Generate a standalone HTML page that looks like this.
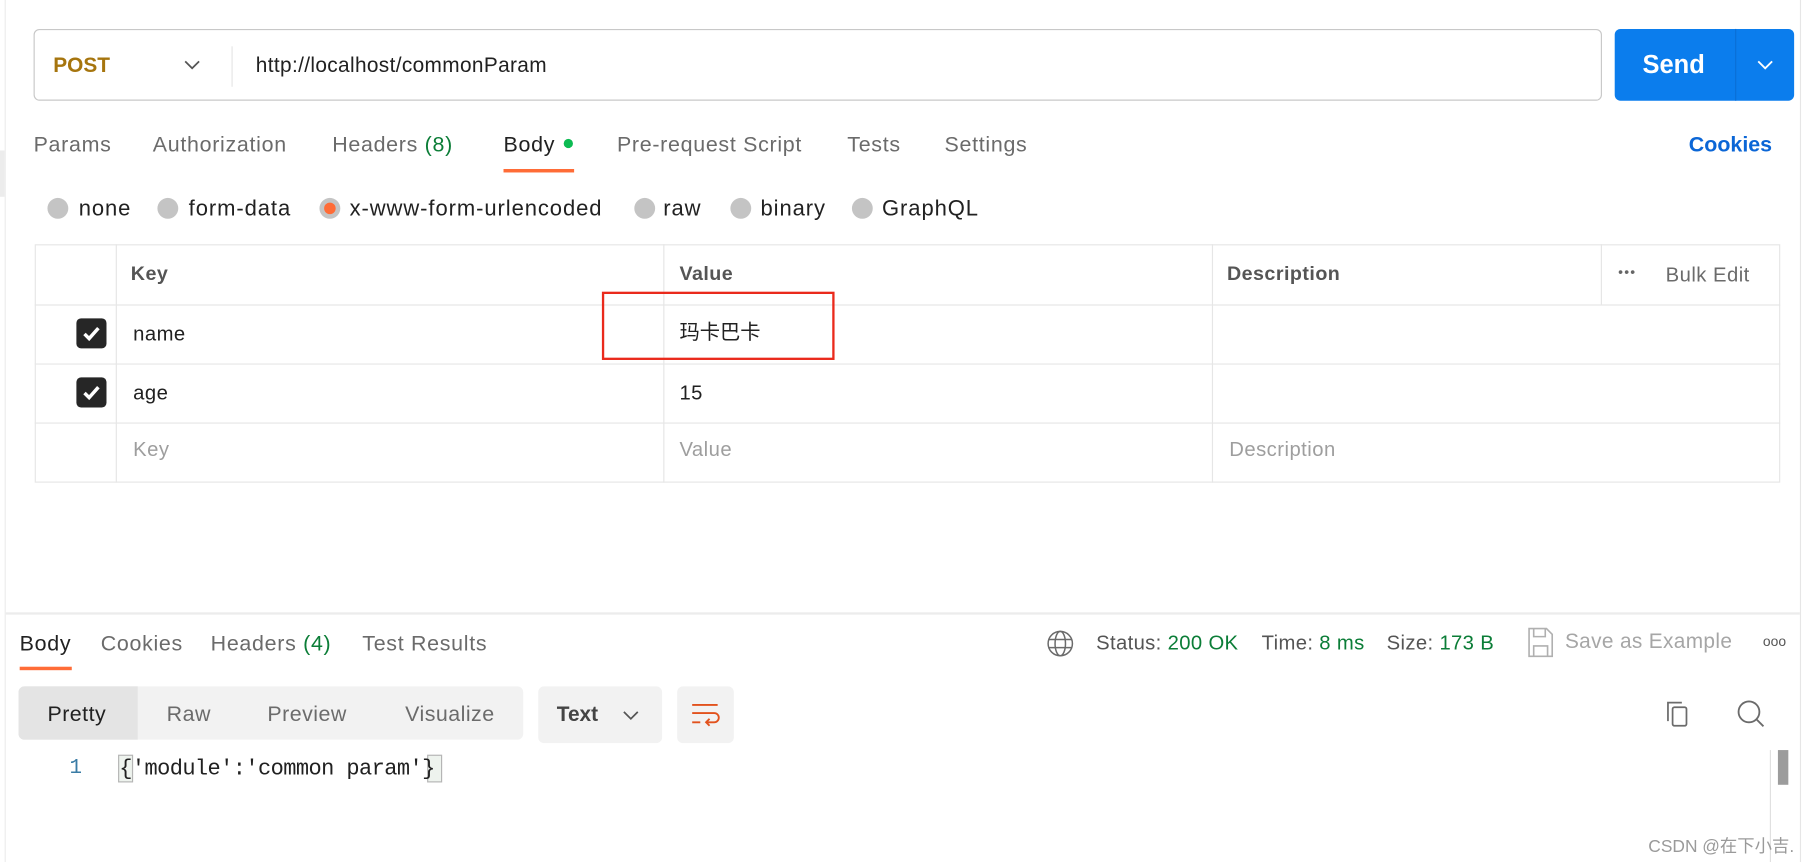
<!DOCTYPE html>
<html><head><meta charset="utf-8"><style>
*{margin:0;padding:0;box-sizing:border-box}
html,body{width:1808px;height:859px;overflow:hidden;background:#fff}
#s{position:absolute;left:0;top:0;width:1562px;height:745px;transform:scale(1.1575);transform-origin:0 0;font-family:"Liberation Sans","Noto Sans CJK SC",sans-serif;color:#212121}
.a{position:absolute;white-space:nowrap}
.t{font-size:18.5px;color:#6b6b6b;top:114px;letter-spacing:0.6px}
.r{top:170px;font-size:19px;color:#212121;letter-spacing:0.8px}
.c{position:absolute;width:18px;height:18px;border-radius:50%;background:#c4c4c4;top:171px}
.h{font-size:17px;font-weight:bold;color:#555;top:227px;letter-spacing:0.4px}
.cell{font-size:17.5px;color:#212121;letter-spacing:0.4px}
.ph{font-size:17.5px;color:#9e9e9e;top:378px;letter-spacing:0.4px}
.cb{position:absolute;left:66px;width:26px;height:26px;background:#262626;border-radius:4px}
.g{color:#0b7d37}
.seg{font-size:18.5px;color:#6b6b6b;top:606px;letter-spacing:0.4px}
</style></head><body><div id="s">
<div class="a" style="left:4px;top:0;width:1px;height:745px;background:#ececec"></div>
<div class="a" style="left:0;top:130px;width:4px;height:40px;background:#ececec"></div>
<div class="a" style="left:1555px;top:0;width:1px;height:745px;background:#e6e6e6"></div>
<div class="a" style="left:29px;top:25px;width:1355px;height:62px;border:1px solid #c8c8c8;border-radius:5px"></div>
<div class="a" style="left:46px;top:46px;font-size:18px;font-weight:bold;color:#a6750e">POST</div>
<svg class="a" style="left:158px;top:50px" width="16" height="12"><path d="M2 3l6 6 6-6" stroke="#555" stroke-width="1.5" fill="none"/></svg>
<div class="a" style="left:200px;top:40px;width:1px;height:35px;background:#e6e6e6"></div>
<div class="a" style="left:221px;top:46px;font-size:18px;color:#212121;letter-spacing:0.3px">http://localhost/commonParam</div>
<div class="a" style="left:1395px;top:25px;width:155px;height:62px;background:#0b7ded;border-radius:5px"></div>
<div class="a" style="left:1499px;top:25px;width:1px;height:62px;background:#0a6fd6"></div>
<div class="a" style="left:1419px;top:43px;font-size:22px;font-weight:bold;color:#fff">Send</div>
<svg class="a" style="left:1517px;top:50px" width="16" height="12"><path d="M2 3l6 6 6-6" stroke="#fff" stroke-width="1.6" fill="none"/></svg>
<div class="a t" style="left:29px">Params</div>
<div class="a t" style="left:132px">Authorization</div>
<div class="a t" style="left:287px">Headers <span class="g">(8)</span></div>
<div class="a t" style="left:435px;color:#212121">Body</div>
<div class="a" style="left:487px;top:120px;width:8px;height:8px;border-radius:50%;background:#0cbb52"></div>
<div class="a" style="left:435px;top:146px;width:61px;height:3px;background:#ff6c37"></div>
<div class="a t" style="left:533px">Pre-request Script</div>
<div class="a t" style="left:732px">Tests</div>
<div class="a t" style="left:816px">Settings</div>
<div class="a t" style="left:1459px;color:#0b66d6;font-weight:bold;letter-spacing:0">Cookies</div>
<div class="c" style="left:41px"></div><div class="a r" style="left:68px">none</div>
<div class="c" style="left:136px"></div><div class="a r" style="left:163px">form-data</div>
<div class="c" style="left:276px;background:#c4c4c4"><div style="margin:4px;width:10px;height:10px;border-radius:50%;background:#ff6c37"></div></div><div class="a r" style="left:302px">x-www-form-urlencoded</div>
<div class="c" style="left:548px"></div><div class="a r" style="left:573px">raw</div>
<div class="c" style="left:631px"></div><div class="a r" style="left:657px">binary</div>
<div class="c" style="left:736px"></div><div class="a r" style="left:762px">GraphQL</div>
<div class="a" style="left:30px;top:211px;width:1508px;height:206px;border:1px solid #e6e6e6"></div>
<div class="a" style="left:30px;top:263px;width:1508px;height:1px;background:#e6e6e6"></div>
<div class="a" style="left:30px;top:314px;width:1508px;height:1px;background:#e6e6e6"></div>
<div class="a" style="left:30px;top:365px;width:1508px;height:1px;background:#e6e6e6"></div>
<div class="a" style="left:100px;top:211px;width:1px;height:206px;background:#e6e6e6"></div>
<div class="a" style="left:573px;top:211px;width:1px;height:206px;background:#e6e6e6"></div>
<div class="a" style="left:1047px;top:211px;width:1px;height:206px;background:#e6e6e6"></div>
<div class="a" style="left:1383px;top:211px;width:1px;height:52px;background:#e6e6e6"></div>
<div class="a h" style="left:113px">Key</div>
<div class="a h" style="left:587px">Value</div>
<div class="a h" style="left:1060px">Description</div>
<div class="a" style="left:1398px;top:228px;font-size:12px;color:#666;letter-spacing:1px">•••</div>
<div class="a" style="left:1439px;top:227px;font-size:17.5px;color:#6b6b6b;letter-spacing:0.4px">Bulk Edit</div>
<div class="cb" style="top:275px"><svg width="26" height="26"><path d="M7 13.5l4 4 8-9" stroke="#fff" stroke-width="3" fill="none"/></svg></div>
<div class="cb" style="top:326px"><svg width="26" height="26"><path d="M7 13.5l4 4 8-9" stroke="#fff" stroke-width="3" fill="none"/></svg></div>
<div class="a cell" style="left:115px;top:278px">name</div>
<div class="a cell" style="left:587px;top:274px;letter-spacing:0">玛卡巴卡</div>
<div class="a cell" style="left:115px;top:329px">age</div>
<div class="a cell" style="left:587px;top:329px">15</div>
<div class="a ph" style="left:115px">Key</div>
<div class="a ph" style="left:587px">Value</div>
<div class="a ph" style="left:1062px">Description</div>
<div class="a" style="left:520px;top:252px;width:201px;height:59px;border:2px solid #ea2a1c"></div>
<div class="a" style="left:5px;top:529px;width:1550px;height:2px;background:#ececec"></div>
<div class="a t" style="left:17px;top:545px;color:#212121">Body</div>
<div class="a" style="left:17px;top:576px;width:45px;height:3px;background:#ff6c37"></div>
<div class="a t" style="left:87px;top:545px">Cookies</div>
<div class="a t" style="left:182px;top:545px">Headers <span class="g">(4)</span></div>
<div class="a t" style="left:313px;top:545px">Test Results</div>
<svg class="a" style="left:904px;top:544px" width="24" height="24" fill="none" stroke="#6b6b6b" stroke-width="1.3"><circle cx="12" cy="12" r="10.5"/><ellipse cx="12" cy="12" rx="4.5" ry="10.5"/><path d="M2 8.5h20M2 15.5h20"/></svg>
<div class="a" style="left:947px;top:545px;font-size:17.5px;color:#555;letter-spacing:0.3px">Status: <span class="g">200 OK</span></div>
<div class="a" style="left:1090px;top:545px;font-size:17.5px;color:#555;letter-spacing:0.3px">Time: <span class="g">8 ms</span></div>
<div class="a" style="left:1198px;top:545px;font-size:17.5px;color:#555;letter-spacing:0.3px">Size: <span class="g">173 B</span></div>
<svg class="a" style="left:1319px;top:542px" width="24" height="26" fill="none" stroke="#b0b0b0" stroke-width="1.4"><path d="M2 1h15l5 5v19H2z M6 1v7h10V1 M6 25v-9h12v9"/></svg>
<div class="a" style="left:1352px;top:544px;font-size:18px;color:#a6a6a6;letter-spacing:0.3px">Save as Example</div>
<div class="a" style="left:1523px;top:547px;font-size:12px;color:#555">ooo</div>
<div class="a" style="left:16px;top:593px;width:436px;height:46px;background:#f2f2f2;border-radius:5px"></div>
<div class="a" style="left:16px;top:593px;width:103px;height:46px;background:#e4e4e4;border-radius:5px 0 0 5px"></div>
<div class="a seg" style="left:41px;color:#212121">Pretty</div>
<div class="a seg" style="left:144px">Raw</div>
<div class="a seg" style="left:231px">Preview</div>
<div class="a seg" style="left:350px">Visualize</div>
<div class="a" style="left:465px;top:593px;width:107px;height:49px;background:#f2f2f2;border-radius:5px"></div>
<div class="a" style="left:481px;top:607px;font-size:18px;font-weight:bold;color:#444">Text</div>
<svg class="a" style="left:537px;top:612px" width="16" height="12"><path d="M2 3l6 6 6-6" stroke="#555" stroke-width="1.5" fill="none"/></svg>
<div class="a" style="left:585px;top:593px;width:49px;height:49px;background:#f2f2f2;border-radius:5px"></div>
<svg class="a" style="left:597px;top:605px" width="26" height="26" fill="none" stroke="#e2521d" stroke-width="1.6"><path d="M1 4h22M1 11h19a4 4 0 0 1 0 8h-6M16 16l-3 3 3 3M1 19h7"/></svg>
<svg class="a" style="left:1438px;top:604px" width="26" height="26" fill="none" stroke="#6b6b6b" stroke-width="1.5"><path d="M3 19V3h12"/><rect x="7" y="7" width="12" height="16" rx="1.5"/></svg>
<svg class="a" style="left:1499px;top:604px" width="28" height="28" fill="none" stroke="#6b6b6b" stroke-width="1.6"><circle cx="12" cy="11" r="9"/><path d="M18.5 17.5l6 6"/></svg>
<div class="a" style="left:60px;top:654px;font-size:18px;color:#3a7ca5;font-family:'Liberation Mono',monospace">1</div>
<div class="a" style="left:102px;top:652px;width:13px;height:24px;background:#eef3ee;border:1px solid #b5b5b5"></div>
<div class="a" style="left:369px;top:652px;width:13px;height:24px;background:#eef3ee;border:1px solid #b5b5b5"></div>
<div class="a" style="left:103px;top:653px;font-size:19px;color:#212121;font-family:'Liberation Mono',monospace;letter-spacing:-0.5px">{'module':'common param'}</div>
<div class="a" style="left:1529px;top:648px;width:1px;height:97px;background:#e0e0e0"></div>
<div class="a" style="left:1536px;top:648px;width:9px;height:30px;background:#9c9c9c"></div>
<div class="a" style="left:1424px;top:720px;font-size:15px;color:#9a9a9a">CSDN @在下小吉.</div>
</div></body></html>
